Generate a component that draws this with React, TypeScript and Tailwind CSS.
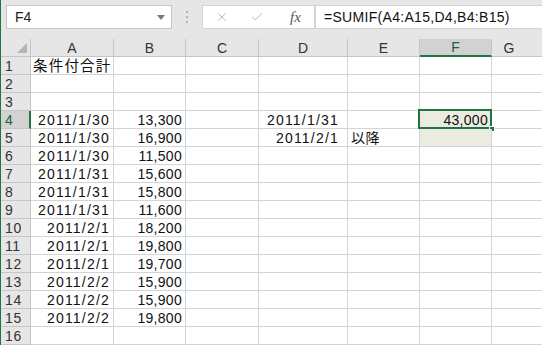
import { X, Check } from "lucide-react";

const GRID = "grid grid-cols-[30px_83px_72px_73px_89px_72px_72px_1fr] h-[18px]";

type RowData = { a?: string; b?: string; d?: string; e?: string; f?: string };

const rows: RowData[] = [
  { a: "条件付合計" },
  {},
  {},
  { a: "2011/1/30", b: "13,300", d: "2011/1/31", f: "43,000" },
  { a: "2011/1/30", b: "16,900", d: "2011/2/1", e: "以降" },
  { a: "2011/1/30", b: "11,500" },
  { a: "2011/1/31", b: "15,600" },
  { a: "2011/1/31", b: "15,800" },
  { a: "2011/1/31", b: "11,600" },
  { a: "2011/2/1", b: "18,200" },
  { a: "2011/2/1", b: "19,800" },
  { a: "2011/2/1", b: "19,700" },
  { a: "2011/2/2", b: "15,900" },
  { a: "2011/2/2", b: "15,900" },
  { a: "2011/2/2", b: "19,800" },
  {},
];

const cell = "border-r border-b border-[#d4d4d4] flex items-center whitespace-nowrap leading-[16px]";

const App = () => {
  return (
    <div
      className="w-[542px] h-[345px] overflow-hidden bg-white border-l border-[#217346] text-[#111] text-[14px] leading-[16px]"
      style={{ fontFamily: '"Liberation Sans", "Noto Sans CJK JP", sans-serif' }}
    >
      {/* toolbar */}
      <div className="h-[39px] bg-[#e6e6e6] flex items-start pt-[5px] pl-[5px]">
        <div className="w-[166px] h-[24px] bg-white border border-[#c6c6c6] flex items-center justify-between pl-[8px] pr-[6px]">
          <span className="text-[14px] text-[#222]">F4</span>
          <svg width="8" height="5" viewBox="0 0 8 5" className="mt-[1px]">
            <path d="M0 0 H8 L4 5 Z" fill="#7a7a7a" />
          </svg>
        </div>
        <div className="w-[30px] h-[24px] flex flex-col items-center justify-center gap-[3px]">
          <span className="w-[2px] h-[2px] bg-[#b4b4b4]" />
          <span className="w-[2px] h-[2px] bg-[#b4b4b4]" />
          <span className="w-[2px] h-[2px] bg-[#b4b4b4]" />
        </div>
        <div className="w-[113px] h-[24px] bg-white border border-[#d4d4d4] flex items-center pl-[12px] gap-[21px]">
          <X className="w-[14px] h-[14px] text-[#b0b0b0]" strokeWidth={1.5} />
          <Check className="w-[14px] h-[14px] text-[#b0b0b0]" strokeWidth={1.5} />
          <span
            className="italic text-[15px] text-[#555] ml-[5px]"
            style={{ fontFamily: '"Liberation Serif", serif' }}
          >
            fx
          </span>
        </div>
        <div className="flex-1 h-[24px] bg-white border-y border-l border-[#d4d4d4] flex items-center pl-[8px]">
          <span className="tracking-[0.3px]">=SUMIF(A4:A15,D4,B4:B15)</span>
        </div>
      </div>

      {/* column headers */}
      <div className={`${GRID} bg-[#e6e6e6] text-[#333]`}>
        <div className="border-r border-b border-[#c6c6c6] relative">
          <svg width="10" height="10" viewBox="0 0 10 10" className="absolute right-[3px] bottom-[3px]">
            <path d="M10 0 V10 H0 Z" fill="#b4b4b4" />
          </svg>
        </div>
        {["A", "B", "C", "D", "E"].map((c) => (
          <div key={c} className="border-r border-b border-[#c6c6c6] flex items-center justify-center">
            {c}
          </div>
        ))}
        <div className="border-r border-b-2 border-b-[#217346] border-r-[#c6c6c6] bg-[#d2d2d2] flex items-center justify-center text-[#1e5e3a]">
          F
        </div>
        <div className="border-b border-[#c6c6c6] flex items-center justify-center pr-[16px]">G</div>
      </div>

      {/* rows */}
      {rows.map((r, i) => {
        const n = i + 1;
        const sel = n === 4;
        return (
          <div key={n} className={GRID}>
            <div
              className={
                sel
                  ? "bg-[#d2d2d2] border-b border-[#c6c6c6] border-r-2 border-r-[#217346] flex items-center pl-[4px] tracking-[0.6px] text-[#1e5e3a]"
                  : "bg-[#e6e6e6] border-b border-r border-[#c6c6c6] flex items-center pl-[4px] tracking-[0.6px] text-[#333]"
              }
            >
              {n}
            </div>
            <div
              className={`${cell} ${
                n === 1 ? "justify-start pl-[2px] text-[14.5px] tracking-[1.2px]" : "justify-end pr-[3px] tracking-[1.2px]"
              }`}
            >
              {r.a}
            </div>
            <div className={`${cell} justify-end pr-[3px] tracking-[0.3px]`}>{r.b}</div>
            <div className={cell} />
            <div className={`${cell} justify-end pr-[8px] tracking-[1.2px]`}>{r.d}</div>
            <div className={`${cell} justify-start pl-[3px] tracking-[0.6px]`}>{r.e}</div>
            <div
              className={`${cell} justify-end pr-[3px] tracking-[0.3px] relative ${
                n === 4 || n === 5 ? "bg-[#eaecdf]" : ""
              }`}
            >
              {r.f}
              {sel && (
                <>
                  <div className="absolute -left-[2px] -top-[2px] -right-[1px] -bottom-[1px] border-2 border-[#217346]" />
                  <div className="absolute -right-[4px] -bottom-[4px] w-[6px] h-[6px] bg-[#217346] border border-white" />
                </>
              )}
            </div>
            <div className="border-b border-[#d4d4d4]" />
          </div>
        );
      })}
    </div>
  );
};

export default App;
